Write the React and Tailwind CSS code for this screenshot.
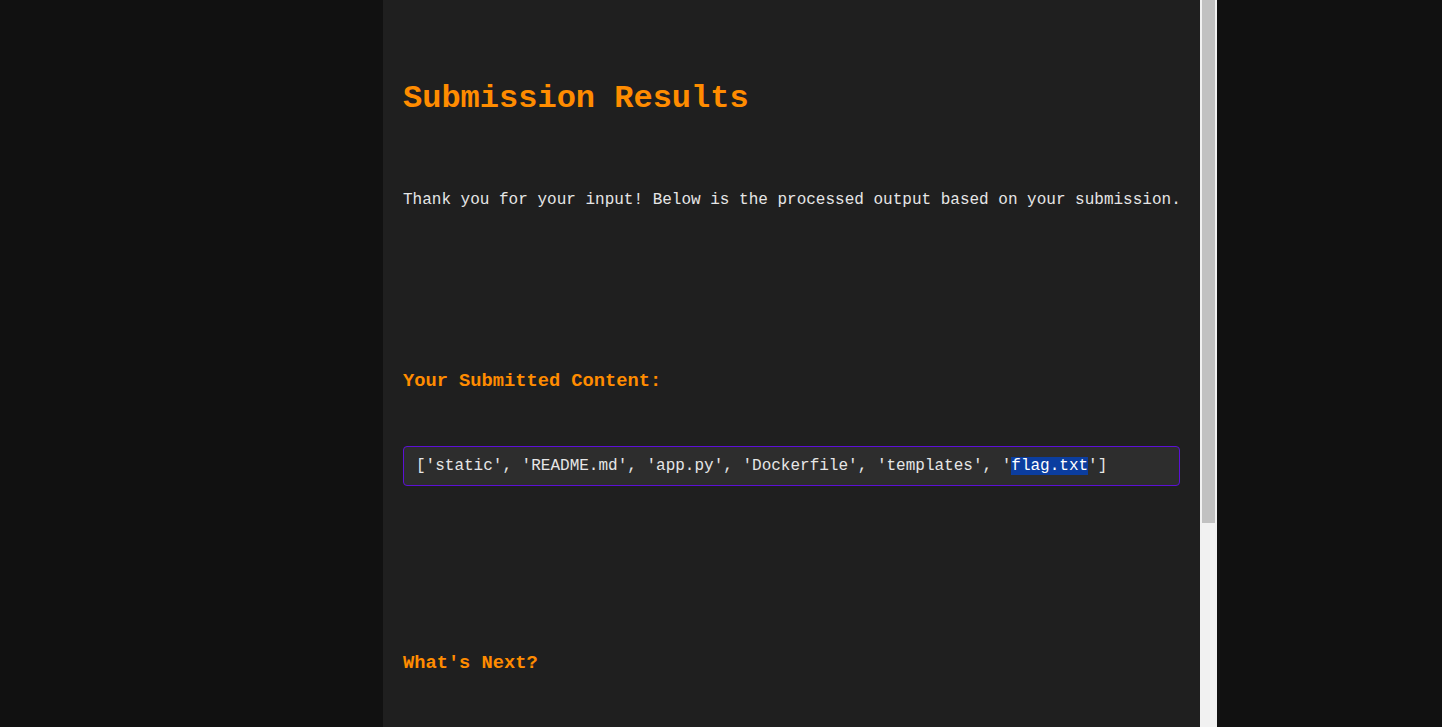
export default function App() {
  return (
    <div className="h-screen bg-[#111111] overflow-hidden font-['Liberation_Mono','Courier_New',monospace]">
      <div className="ml-[383px] flex h-screen w-[834px]">
        {/* Results panel */}
        <div className="w-[817px] overflow-hidden bg-[#1f1f1f] px-5">
          <h1 className="pt-[81px] text-[32px] leading-[36px] font-bold text-[#ff8c00]">
            Submission Results
          </h1>

          <p className="mt-[74px] whitespace-nowrap text-[16px] leading-[18px] text-[#e6e6e6]">
            Thank you for your input! Below is the processed output based on your submission.
          </p>

          <h3 className="mt-[162px] text-[18.72px] leading-[21px] font-bold text-[#ff8c00]">
            Your Submitted Content:
          </h3>

          <div className="mt-[54px] rounded border border-[#5c10d6] bg-[#2d2d2d] px-3 py-[10px] text-[16px] leading-[18px] text-[#e6e6e6] whitespace-pre">
            ['static', 'README.md', 'app.py', 'Dockerfile', 'templates', '<span className="bg-[#0b3d9f] text-white">flag.txt</span>']
          </div>

          <h3 className="mt-[167px] text-[18.72px] leading-[21px] font-bold text-[#ff8c00]">
            What's Next?
          </h3>
        </div>

        {/* Scrollbar */}
        <div className="w-[17px] bg-[#f1f1f1] px-[2px]">
          <div className="h-[523px] bg-[#c1c1c1]" />
        </div>
      </div>
    </div>
  );
}
